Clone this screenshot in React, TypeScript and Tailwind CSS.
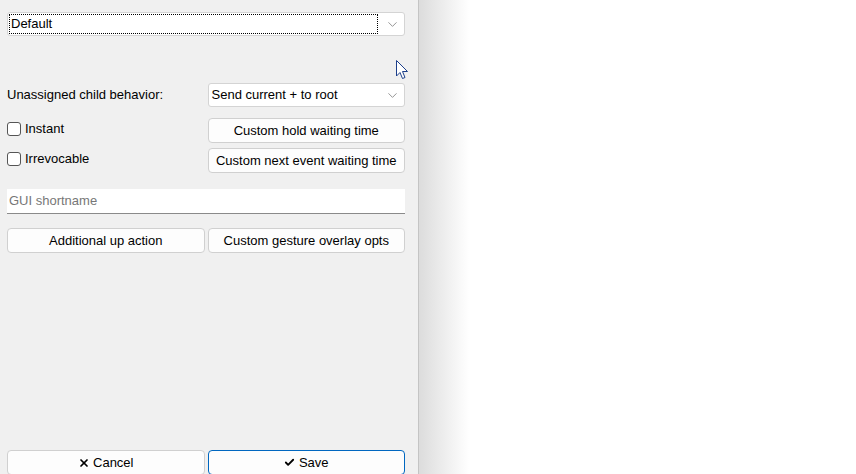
import { ChevronDown, X, Check } from "lucide-react";

function Combo({ value, focused }: { value: string; focused?: boolean }) {
  return (
    <div className="flex h-[24px] items-center rounded-[3px] border border-[#d4d4d4] bg-white pl-[1px] pr-[4px]">
      <div
        className={
          "flex h-[20px] flex-1 items-center " +
          (focused ? "border border-dotted border-black pl-[1px]" : "pl-[2px]")
        }
      >
        {value}
      </div>
      <ChevronDown size={15} strokeWidth={1.1} className="ml-[7px] text-[#666]" />
    </div>
  );
}

function Btn({ children, primary }: { children: React.ReactNode; primary?: boolean }) {
  return (
    <div
      className={
        "flex h-[25px] items-center justify-center rounded-[4px] bg-[#fdfdfd] " +
        (primary ? "border border-[#0067c0]" : "border border-[#d0d0d0]")
      }
    >
      {children}
    </div>
  );
}

function CheckRow({ label }: { label: string }) {
  return (
    <div className="flex items-center gap-[4px]">
      <span className="h-[14px] w-[14px] rounded-[3px] border border-[#555] bg-white" />
      {label}
    </div>
  );
}

export default function App() {
  return (
    <div
      className="flex h-[474px] w-[856px] overflow-hidden bg-white text-[13px] text-black"
      style={{ fontFamily: '"Liberation Sans", Arial, sans-serif' }}
    >
      <div className="relative flex w-[418px] flex-col bg-[#f0f0f0] px-[7px] pt-[12px]">
        <div className="mr-[6px]">
          <Combo value="Default" focused />
        </div>

        {/* behaviour row */}
        <div className="mt-[47px] mr-[6px] grid grid-cols-2 gap-x-[3px]">
          <div className="flex items-center">Unassigned child behavior:</div>
          <Combo value="Send current + to root" />
        </div>

        <div className="mt-[11px] mr-[6px] grid grid-cols-2 gap-x-[3px] gap-y-[5px]">
          <div className="mt-[1px]">
            <CheckRow label="Instant" />
          </div>
          <Btn>Custom hold waiting time</Btn>
          <div className="mt-[1px]">
            <CheckRow label="Irrevocable" />
          </div>
          <Btn>Custom next event waiting time</Btn>
        </div>

        <div className="mt-[16px] mr-[6px] flex h-[25px] items-center border-b border-[#8a8a8a] bg-white pl-[2px] text-[#777]">
          GUI shortname
        </div>

        <div className="mt-[14px] mr-[6px] grid grid-cols-2 gap-x-[3px]">
          <Btn>Additional up action</Btn>
          <Btn>Custom gesture overlay opts</Btn>
        </div>

        <div className="mt-auto mr-[6px] mb-[-1px] grid grid-cols-2 gap-x-[3px]">
          <Btn>
            <X size={12} strokeWidth={3.5} className="mr-[3px]" />
            Cancel
          </Btn>
          <Btn primary>
            <Check size={11} strokeWidth={4} className="mr-[4px]" />
            Save
          </Btn>
        </div>

        {/* mouse pointer */}
        <svg
          className="absolute left-[396px] top-[60px]"
          width="13"
          height="20"
          viewBox="0 0 13 20"
        >
          <path
            d="M0.5 0.5 L0.5 16 L4 12.5 L6.5 18.5 L9 17.5 L6.5 11.5 L11.5 11.5 Z"
            fill="white"
            stroke="#1d3f8a"
            strokeWidth="1"
          />
        </svg>
      </div>
      <div className="w-[1px] bg-[#c4c4c4]" />
      <div className="w-[50px] bg-gradient-to-r from-[#dcdcdc] to-white" />
      <div className="flex-1 bg-white" />
    </div>
  );
}
